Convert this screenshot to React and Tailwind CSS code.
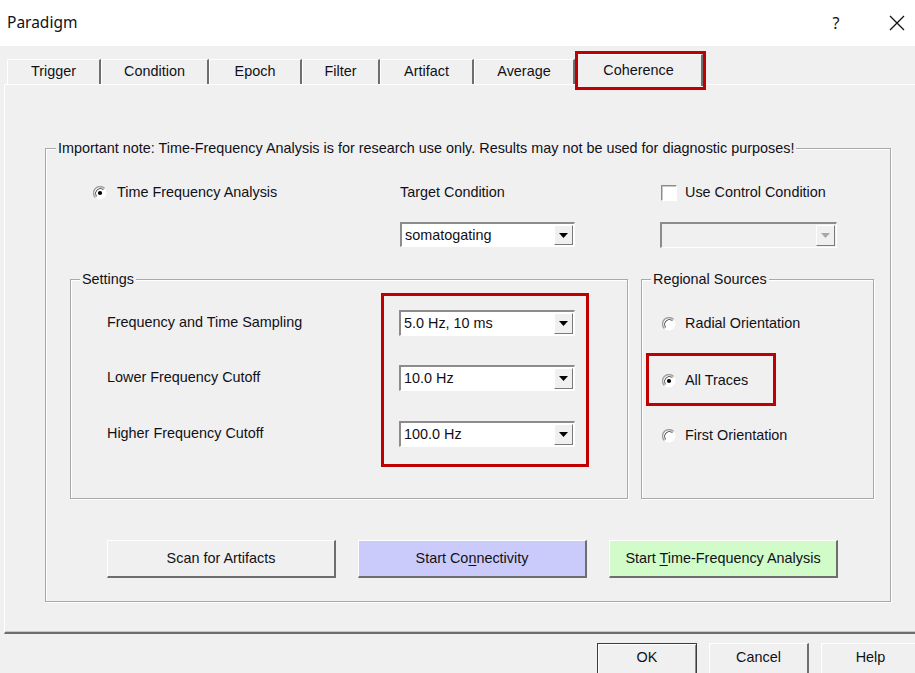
import React from "react";

const tabs = [
  { label: "Trigger", w: "w-[94px]" },
  { label: "Condition", w: "w-[108px]" },
  { label: "Epoch", w: "w-[93px]" },
  { label: "Filter", w: "w-[78px]" },
  { label: "Artifact", w: "w-[94px]" },
  { label: "Average", w: "w-[101px]" },
];

const Radio = ({ checked }) => (
  <svg width="14" height="14" viewBox="0 0 14 14" className="shrink-0">
    <circle cx="7" cy="7" r="6.5" fill="#fff" />
    <path d="M2.4 11.6 A6.5 6.5 0 0 1 11.6 2.4" stroke="#a0a0a0" strokeWidth="1.4" fill="none" />
    <path d="M3.5 10.5 A5 5 0 0 1 10.5 3.5" stroke="#555" strokeWidth="1" fill="none" />
    {checked && <circle cx="7" cy="7" r="2.1" fill="#000" />}
  </svg>
);

const Combo = ({ value, className, disabled }) => (
  <div
    className={`flex shrink-0 border-t-2 border-l-2 border-t-[#8c8c8c] border-l-[#8c8c8c] border-b border-r border-b-white border-r-white ${
      disabled ? "bg-[#f0f0f0]" : "bg-white"
    } ${className}`}
  >
    <div className="flex-1 pl-[3px] flex items-center leading-none">{value}</div>
    <div className="w-[19px] m-[1px] bg-[#f0f0f0] border-t border-l border-t-white border-l-white border-r border-b border-r-[#7a7a7a] border-b-[#7a7a7a] flex items-center justify-center">
      <svg width="9" height="5" viewBox="0 0 9 5">
        <path d="M0 0h9L4.5 5z" fill={disabled ? "#a8a8a8" : "#000"} />
      </svg>
    </div>
  </div>
);

const GroupBox = ({ title, className, titleLeft, children }) => (
  <div className={`relative shrink-0 border border-[#a9a9a9] shadow-[inset_1px_1px_0_#fff,1px_1px_0_#fff] ${className}`}>
    <span className={`absolute -top-[9px] ${titleLeft} px-[2px] bg-[#f0f0f0] leading-[16px] whitespace-nowrap`}>
      {title}
    </span>
    {children}
  </div>
);

const Button = ({ children, bg }) => (
  <div
    className={`w-[229px] h-[38px] shrink-0 flex items-center justify-center border-t border-l border-white border-r-2 border-b-2 border-r-[#6e6e6e] border-b-[#6e6e6e] ${bg}`}
  >
    {children}
  </div>
);

const DlgButton = ({ children, isDefault }) => (
  <div
    className={`w-[100px] h-[32px] shrink-0 flex items-center justify-center pb-[2px] ${
      isDefault
        ? "border border-[#3c3c3c] shadow-[inset_1px_1px_0_#fff,inset_-1px_-1px_0_#8a8a8a]"
        : "border-t border-l border-white border-r-2 border-b-2 border-r-[#6e6e6e] border-b-[#6e6e6e]"
    }`}
  >
    {children}
  </div>
);

export default function App() {
  return (
    <div className="w-[915px] h-[673px] overflow-hidden bg-[#f0f0f0] text-[14.4px] text-[#101018] font-['Liberation_Sans',Arial,sans-serif]">
      {/* Title bar */}
      <div className="h-[46px] bg-white flex items-center">
        <span className="pl-[7px] text-[15.5px] font-['Noto_Sans',sans-serif]">Paradigm</span>
        <div className="ml-auto flex items-center pr-[3px]">
          <span className="w-[30px] text-center text-[16px] font-['Noto_Sans',sans-serif]">?</span>
          <span className="w-[30px] ml-[31px] flex justify-center">
            <svg width="16" height="16" viewBox="0 0 16 16">
              <path d="M1 1L15 15M15 1L1 15" stroke="#111" strokeWidth="1.3" />
            </svg>
          </span>
        </div>
      </div>

      {/* Tabs */}
      <div className="h-[38px] flex items-end pl-[7px]">
        {tabs.map((t) => (
          <div
            key={t.label}
            className={`${t.w} h-[25px] flex items-center justify-center border-t border-l border-white border-r-2 border-r-[#6e6e6e] rounded-tl-[2px]`}
          >
            {t.label}
          </div>
        ))}
        <div className="relative z-10 w-[128px] h-[32px] -mb-[2px] bg-[#f0f0f0] flex items-start justify-center pt-[5px] border-t border-l border-white border-r-2 border-r-[#6e6e6e]">
          Coherence
          <div className="absolute -left-[1px] -top-[4px] w-[131px] h-[39px] border-[3px] border-[#c00000]" />
        </div>
      </div>

      {/* Tab panel */}
      <div className="ml-[4px] w-[930px] h-[550px] border-t border-l border-white border-b-2 border-b-[#6e6e6e] shadow-[inset_0_-1px_0_#c8c8c8]">
        <GroupBox
          title="Important note: Time-Frequency Analysis is for research use only. Results may not be used for diagnostic purposes!"
          titleLeft="left-[10px]"
          className="ml-[40px] mt-[63px] w-[846px] h-[454px]"
        >
          {/* Row A */}
          <div className="mt-[35px] h-[17px] flex items-center pl-[47px]">
            <div className="w-[307px] flex items-center">
              <Radio checked />
              <span className="ml-[10px]">Time Frequency Analysis</span>
            </div>
            <div className="w-[261px]">Target Condition</div>
            <div className="flex items-center">
              <div className="w-[16px] h-[16px] bg-white border-t border-l border-[#8c8c8c] border-r border-b border-r-white border-b-white shadow-[inset_1px_1px_0_#c8c8c8]" />
              <span className="ml-[8px]">Use Control Condition</span>
            </div>
          </div>

          {/* Row B */}
          <div className="mt-[21px] flex items-start pl-[354px]">
            <Combo value="somatogating" className="w-[175px] h-[25px]" />
            <Combo value="" disabled className="ml-[85px] w-[177px] h-[26px]" />
          </div>

          {/* Row C */}
          <div className="mt-[31px] flex pl-[24px]">
            <GroupBox title="Settings" titleLeft="left-[9px]" className="w-[558px] h-[220px]">
              {[
                ["Frequency and Time Sampling", "5.0 Hz, 10 ms", "mt-[30px]"],
                ["Lower Frequency Cutoff", "10.0 Hz", "mt-[29px]"],
                ["Higher Frequency Cutoff", "100.0 Hz", "mt-[30px]"],
              ].map(([label, value, mt]) => (
                <div key={label} className={`${mt} h-[26px] flex items-center pl-[36px]`}>
                  <span className="w-[292px]">{label}</span>
                  <Combo value={value} className="w-[176px] h-[26px]" />
                </div>
              ))}
              <div className="absolute left-[310px] top-[13px] w-[208px] h-[174px] border-[3px] border-[#c00000]" />
            </GroupBox>

            <GroupBox title="Regional Sources" titleLeft="left-[9px]" className="ml-[13px] w-[233px] h-[220px]">
              {[
                ["Radial Orientation", false, "mt-[35px]"],
                ["All Traces", true, "mt-[40px]"],
                ["First Orientation", false, "mt-[38px]"],
              ].map(([label, checked, mt]) => (
                <div key={label} className={`${mt} h-[17px] flex items-center pl-[20px]`}>
                  <Radio checked={checked} />
                  <span className="ml-[9px]">{label}</span>
                </div>
              ))}
              <div className="absolute left-[4px] top-[73px] w-[130px] h-[53px] border-[3px] border-[#c00000]" />
            </GroupBox>
          </div>

          {/* Row D */}
          <div className="mt-[41px] flex gap-[22px] pl-[61px]">
            <Button bg="bg-[#f0f0f0]">Scan for Artifacts</Button>
            <Button bg="bg-[#cbcbfb]">
              <span>
                Start Co<span className="underline underline-offset-2">n</span>nectivity
              </span>
            </Button>
            <Button bg="bg-[#d2fbca]">
              <span>
                Start <span className="underline underline-offset-2">T</span>ime-Frequency Analysis
              </span>
            </Button>
          </div>
        </GroupBox>
      </div>

      {/* Dialog buttons */}
      <div className="mt-[9px] flex gap-[12px] pl-[597px]">
        <DlgButton isDefault>OK</DlgButton>
        <DlgButton>Cancel</DlgButton>
        <DlgButton>Help</DlgButton>
      </div>
    </div>
  );
}
